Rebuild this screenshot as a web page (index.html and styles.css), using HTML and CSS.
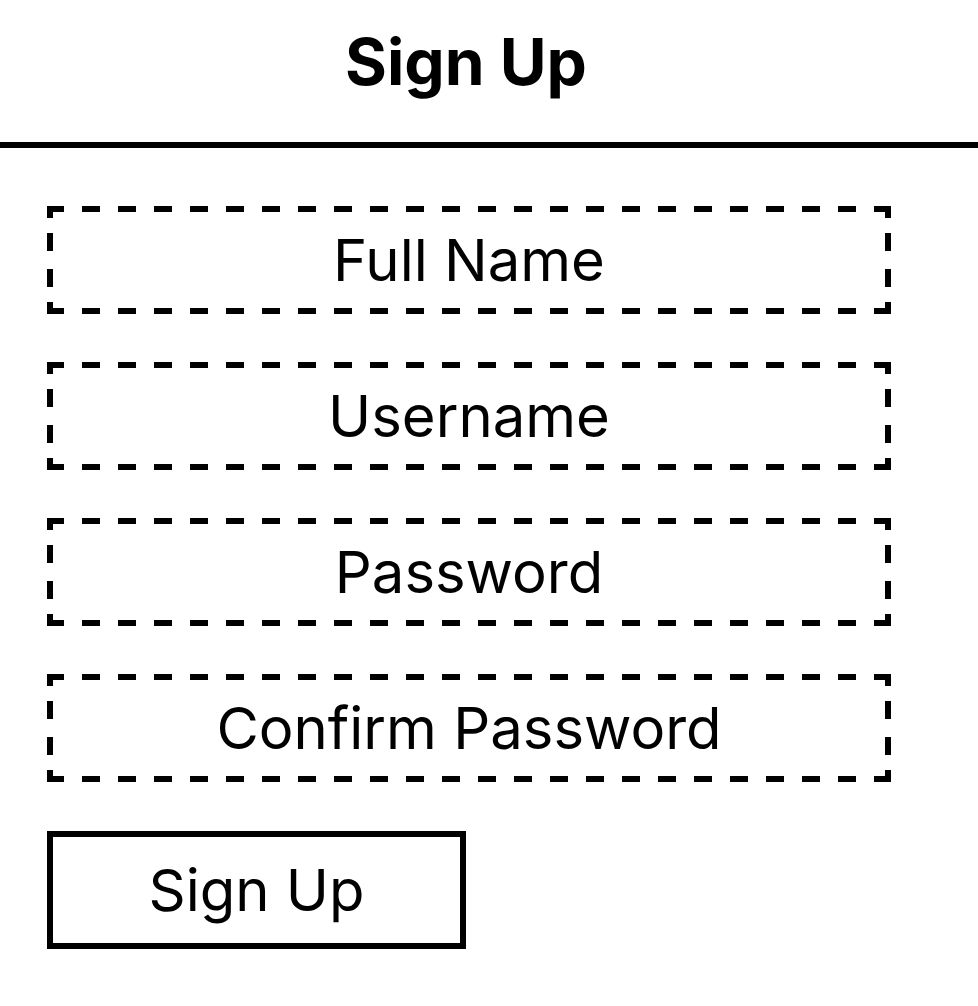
FILE: index.html
```html
<!DOCTYPE html>
<html lang="en">
<head>
    <meta charset="UTF-8">
    <meta name="viewport" content="width=device-width, initial-scale=1.0">
    <title>Sign Up</title>
    <link rel="stylesheet" href="styles.css">
</head>
<body>
    <header class="header">
        <h1>Sign Up</h1>
    </header>

    <form class="signup-form" onsubmit="return false;">
        <input type="text" class="field" placeholder="Full Name">
        <input type="text" class="field" placeholder="Username">
        <input type="password" class="field" placeholder="Password">
        <input type="password" class="field" placeholder="Confirm Password">
        <button type="submit" class="submit-btn">Sign Up</button>
    </form>
</body>
</html>
```

FILE: styles.css
```css
body {
    margin: 0;
    font-family: Inter, "Noto Sans", sans-serif;
    color: #000;
    background: #fff;
}
.header {
    border-bottom: 6px solid #000;
    padding: 0 0 18px 48px;
}
.header h1 {
    width: 836px;
    margin: 0;
    font-size: 64px;
    font-weight: 700;
    line-height: 124px;
    text-align: center;
}
.signup-form {
    display: flex;
    flex-direction: column;
    align-items: flex-start;
    gap: 48px;
    padding: 58px 0 0 47px;
}
/* dashed border drawn by hand: 18px dashes, 18px gaps */
.field {
    box-sizing: border-box;
    width: 844px;
    height: 108px;
    border: 6px solid transparent;
    background:
        linear-gradient(180deg, #000 0 12px, transparent 12px 27px, #000 27px 45px, transparent 45px 63px, #000 63px 81px, transparent 81px 96px, #000 96px) left top / 6px 100% no-repeat,
        linear-gradient(180deg, #000 0 12px, transparent 12px 27px, #000 27px 45px, transparent 45px 63px, #000 63px 81px, transparent 81px 96px, #000 96px) right top / 6px 100% no-repeat,
        repeating-linear-gradient(90deg, #000 0 18px, transparent 18px 36px) -1px top / calc(100% + 1px) 6px no-repeat,
        repeating-linear-gradient(90deg, #000 0 18px, transparent 18px 36px) -1px bottom / calc(100% + 1px) 6px no-repeat;
    background-origin: border-box;
    font-family: inherit;
    font-size: 58px;
    color: #000;
    text-align: center;
    outline: none;
    padding: 0;
}
.field::placeholder {
    color: #000;
    opacity: 1;
}
.submit-btn {
    box-sizing: border-box;
    width: 419px;
    height: 118px;
    margin-top: 1px;
    border: 6px solid #000;
    background: #fff;
    font-family: inherit;
    font-size: 58px;
    color: #000;
    cursor: pointer;
    padding: 0;
}
```
